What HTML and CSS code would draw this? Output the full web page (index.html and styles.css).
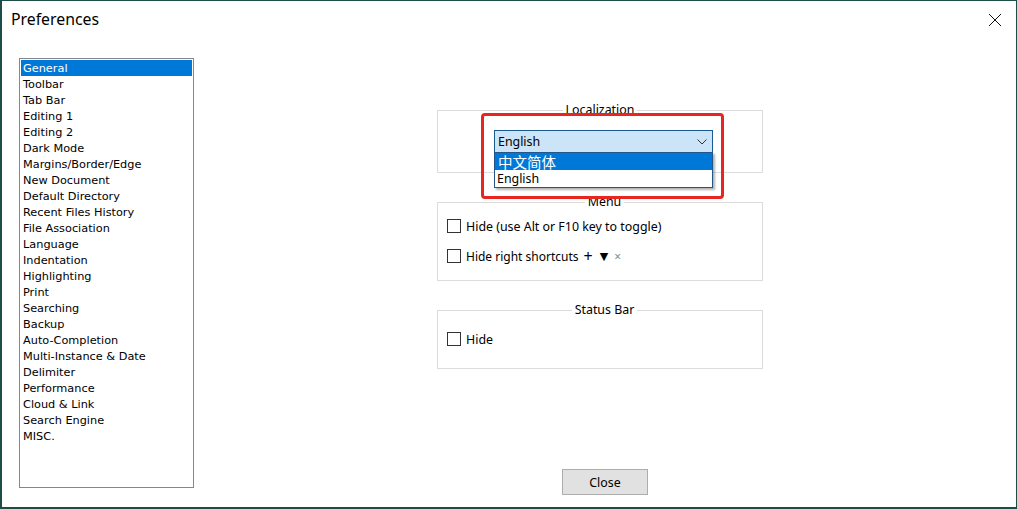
FILE: index.html
```html
<!DOCTYPE html>
<html lang="en">
  <head>
    <meta charset="UTF-8" />
    <meta name="viewport" content="width=device-width, initial-scale=1.0" />
    <title>Preferences</title>
    <link rel="stylesheet" href="styles.css">
  </head>
  <body>
    <div class="window">
      <div class="titlebar">
        <div class="title">Preferences</div>
        <div class="closex">
          <svg width="14" height="14" viewBox="0 0 14 14">
            <path d="M1 1 L13 13 M13 1 L1 13" stroke="#111" stroke-width="1" fill="none" />
          </svg>
        </div>
      </div>
      <div class="content">
        <div class="listbox">
          <div class="item selected">General</div>
          <div class="item">Toolbar</div>
          <div class="item">Tab Bar</div>
          <div class="item">Editing 1</div>
          <div class="item">Editing 2</div>
          <div class="item">Dark Mode</div>
          <div class="item">Margins/Border/Edge</div>
          <div class="item">New Document</div>
          <div class="item">Default Directory</div>
          <div class="item">Recent Files History</div>
          <div class="item">File Association</div>
          <div class="item">Language</div>
          <div class="item">Indentation</div>
          <div class="item">Highlighting</div>
          <div class="item">Print</div>
          <div class="item">Searching</div>
          <div class="item">Backup</div>
          <div class="item">Auto-Completion</div>
          <div class="item">Multi-Instance &amp; Date</div>
          <div class="item">Delimiter</div>
          <div class="item">Performance</div>
          <div class="item">Cloud &amp; Link</div>
          <div class="item">Search Engine</div>
          <div class="item">MISC.</div>
        </div>
        <div class="panel">
          <div class="groups">
            <fieldset class="group loc">
              <legend>Localization</legend>
              <div class="combowrap">
                <div class="combo">
                  <span>English</span>
                  <svg width="10" height="6" viewBox="0 0 10 6">
                    <path d="M0.5 0.5 L5 5 L9.5 0.5" stroke="#333" stroke-width="1" fill="none" />
                  </svg>
                </div>
                <div class="dropdown">
                  <div class="opt cjk selected">中文简体</div>
                  <div class="opt">English</div>
                </div>
                <div class="highlight"></div>
              </div>
            </fieldset>
            <fieldset class="group menu">
              <legend>Menu</legend>
              <label class="check"><span class="box"></span>Hide (use Alt or F10 key to toggle)</label>
              <label class="check"><span class="box"></span><span class="narrow">Hide right shortcuts</span><span class="plus">+</span><span class="tri">▼</span><span class="times">×</span></label>
            </fieldset>
            <fieldset class="group status">
              <legend>Status Bar</legend>
              <label class="check"><span class="box"></span>Hide</label>
            </fieldset>
          </div>
          <div class="footer">
            <button class="closebtn">Close</button>
          </div>
        </div>
      </div>
    </div>
  </body>
</html>
```

FILE: styles.css
```css
body {
  margin: 0;
  font-family: "Noto Sans", sans-serif;
  color: #000;
}

.window {
  width: 1017px;
  height: 509px;
  box-sizing: border-box;
  border: 1px solid #1e4d47;
  border-left-width: 2px;
  border-bottom-width: 2px;
  background: #fff;
  display: flex;
  flex-direction: column;
}

.titlebar {
  height: 37px;
  display: flex;
  align-items: center;
  justify-content: space-between;
  padding: 0 14px 0 9px;
}

.title {
  font-size: 15.8px;
  margin-top: -1px;
}

.closex {
  display: flex;
}

.content {
  display: flex;
  flex: 1;
  padding: 20px 0 0 17px;
}

.listbox {
  width: 175px;
  height: 430px;
  box-sizing: border-box;
  border: 1px solid #828790;
  padding: 1px;
  font-family: "DejaVu Sans", sans-serif;
  font-size: 11.3px;
}

.item {
  height: 16px;
  line-height: 17px;
  padding-left: 2px;
  white-space: nowrap;
}

.item.selected {
  background: #0078d7;
  color: #fff;
}

.panel {
  flex: 1;
  display: flex;
  flex-direction: column;
  font-size: 12.4px;
}

.groups {
  margin-left: 243px;
  margin-top: 45px;
  width: 326px;
  display: flex;
  flex-direction: column;
  gap: 22px;
}

.group {
  margin: 0;
  padding: 0;
  border: 1px solid #dcdcdc;
  min-width: 0;
  box-sizing: border-box;
}

.group legend {
  margin: 0 auto;
  padding: 0 3px;
  line-height: 14px;
  font-size: 12.4px;
}

.loc {
  height: 70px;
}

.menu {
  height: 86px;
  padding: 9px 0 0 9px;
}

.status {
  height: 66px;
  padding: 14px 0 0 9px;
}

.combowrap {
  position: relative;
  margin: 13px 0 0 56px;
  width: 219px;
}

.combo {
  height: 23px;
  box-sizing: border-box;
  border: 1px solid #1b5b94;
  background: #cce4f7;
  display: flex;
  align-items: center;
  justify-content: space-between;
  padding: 0 5px 0 3px;
}

.dropdown {
  position: absolute;
  left: 0;
  top: 22px;
  width: 219px;
  box-sizing: border-box;
  border: 1px solid #24568a;
  background: #fff;
  box-shadow: 2px 2px 2px rgba(0, 0, 0, 0.3);
  z-index: 2;
}

.opt {
  height: 17px;
  line-height: 17px;
  padding-left: 2px;
}

.opt.cjk {
  font-family: "Noto Sans CJK SC", sans-serif;
  font-size: 14.5px;
  padding-left: 3px;
}

.opt.selected {
  background: #0078d7;
  color: #fff;
}

.highlight {
  position: absolute;
  left: -13px;
  top: -17px;
  width: 243px;
  height: 86px;
  box-sizing: border-box;
  border: 3px solid #e8251f;
  border-radius: 4px;
  z-index: 3;
}

.check {
  display: flex;
  align-items: center;
  height: 16px;
  margin-bottom: 14px;
  white-space: nowrap;
}

.box {
  width: 14px;
  height: 14px;
  box-sizing: border-box;
  border: 1px solid #333;
  margin-right: 5px;
}

.narrow {
  font-size: 12px;
}

.plus {
  font-size: 16px;
  margin: 0 7px 0 5px;
}

.tri {
  font-family: "DejaVu Sans", sans-serif;
  font-size: 11px;
  margin-right: 6px;
}

.times {
  color: #888;
  font-size: 12px;
}

.footer {
  margin-top: auto;
  display: flex;
  justify-content: center;
  padding-bottom: 12px;
}

.closebtn {
  width: 86px;
  height: 26px;
  background: #e1e1e1;
  border: 1px solid #adadad;
  font-family: "Noto Sans", sans-serif;
  font-size: 12.4px;
  padding: 0;
}
```
